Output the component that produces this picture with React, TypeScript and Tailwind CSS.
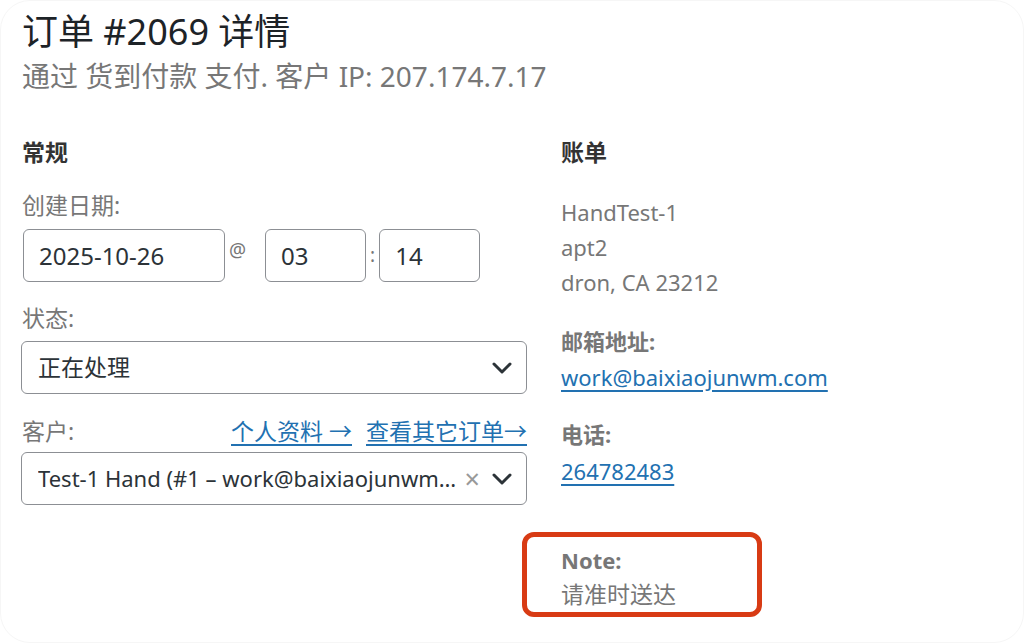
import React from "react";

const font = { fontFamily: '"Noto Sans", "Noto Sans CJK SC", sans-serif' };

function Chevron() {
  return (
    <svg width="20" height="12" viewBox="0 0 20 12" className="shrink-0">
      <path d="M2 2 L10 10 L18 2" fill="none" stroke="#2c3338" strokeWidth="3" strokeLinecap="round" strokeLinejoin="round" />
    </svg>
  );
}

function Field({ value, className }: { value: string; className: string }) {
  return (
    <div className={`flex h-[53px] items-center rounded-[6px] border-[1.5px] border-[#8c8f94] bg-white px-[15px] text-[24px] text-[#2c3338] ${className}`}>
      {value}
    </div>
  );
}

function SelectBox({ value, clearable, size }: { value: string; clearable?: boolean; size: string }) {
  return (
    <div className="flex h-[53px] w-[506px] items-center gap-2 rounded-[6px] border-[1.5px] border-[#8c8f94] bg-white pl-4 pr-[14px] text-[#2c3338]">
      <span className={`min-w-0 flex-1 truncate ${size}`}>{value}</span>
      {clearable && <span className="mr-[4px] text-[27px] leading-none text-[#999]">×</span>}
      <Chevron />
    </div>
  );
}

export default function App() {
  return (
    <div style={font} className="h-[643px] w-[1024px] overflow-hidden rounded-[30px] border border-[#f6f6f6] bg-white">
      <div className="px-[21px] pt-[8px]">
        <h2 className="text-[36px] leading-[46px] text-[#1d2327]">订单 #2069 详情</h2>
        <p className="mt-[4px] text-[28px] leading-[34px] text-[#777]">通过 货到付款 支付. 客户 IP: 207.174.7.17</p>
      </div>

      <div className="mt-[44px] flex gap-[34px] pl-[20px]">
        <div className="w-[506px]">
          <h3 className="pl-[1px] text-[23px] font-bold leading-[30px] text-[#333]">常规</h3>
          <div className="mt-[23px] pl-[1px] text-[23px] leading-[30px] text-[#777]">创建日期:</div>
          <div className="mt-[9px] flex items-center pl-[2px]">
            <Field value="2025-10-26" className="w-[202px]" />
            <span className="ml-[4px] mr-[19px] -mt-[10px] text-[19px] text-[#777]">@</span>
            <Field value="03" className="w-[101px]" />
            <span className="mx-[4px] text-[19px] text-[#777]">:</span>
            <Field value="14" className="w-[101px]" />
          </div>
          <div className="mt-[21px] pl-[1px] text-[23px] leading-[30px] text-[#777]">状态:</div>
          <div className="mt-[8px]">
            <SelectBox value="正在处理" size="text-[23px]" />
          </div>
          <div className="mt-[22px] flex items-center justify-between pl-[1px] text-[23px] leading-[30px]">
            <span className="text-[#777]">客户:</span>
            <span className="flex gap-[14px] text-[#2271b1]">
              <span className="underline underline-offset-[4px]">个人资料 →</span>
              <span className="underline underline-offset-[4px]">查看其它订单→</span>
            </span>
          </div>
          <div className="mt-[6px]">
            <SelectBox value="Test-1 Hand (#1 – work@baixiaojunwm…" size="text-[22px]" clearable />
          </div>
        </div>

        <div className="w-[420px]">
          <h3 className="text-[23px] font-bold leading-[30px] text-[#333]">账单</h3>
          <div className="mt-[28px] text-[22px] leading-[35px] text-[#777]">
            <div>HandTest-1</div>
            <div>apt2</div>
            <div>dron, CA 23212</div>
          </div>
          <div className="mt-[23px] text-[22px] leading-[36px]">
            <div className="font-bold text-[#777]">邮箱地址:</div>
            <div className="text-[#2271b1] underline underline-offset-[4px]">work@baixiaojunwm.com</div>
          </div>
          <div className="mt-[21px] text-[22px] leading-[36px]">
            <div className="font-bold text-[#777]">电话:</div>
            <div className="mt-[1px] text-[#2271b1] underline underline-offset-[4px]">264782483</div>
          </div>
          <div className="-ml-[39px] mt-[43px] w-[240px] rounded-[12px] border-[5px] border-[#d83b14] pb-[1px] pl-[34px] pt-[6px] text-[22px] leading-[34px]">
            <div className="font-bold text-[#777]">Note:</div>
            <div className="text-[23px] text-[#777]">请准时送达</div>
          </div>
        </div>
      </div>
    </div>
  );
}
